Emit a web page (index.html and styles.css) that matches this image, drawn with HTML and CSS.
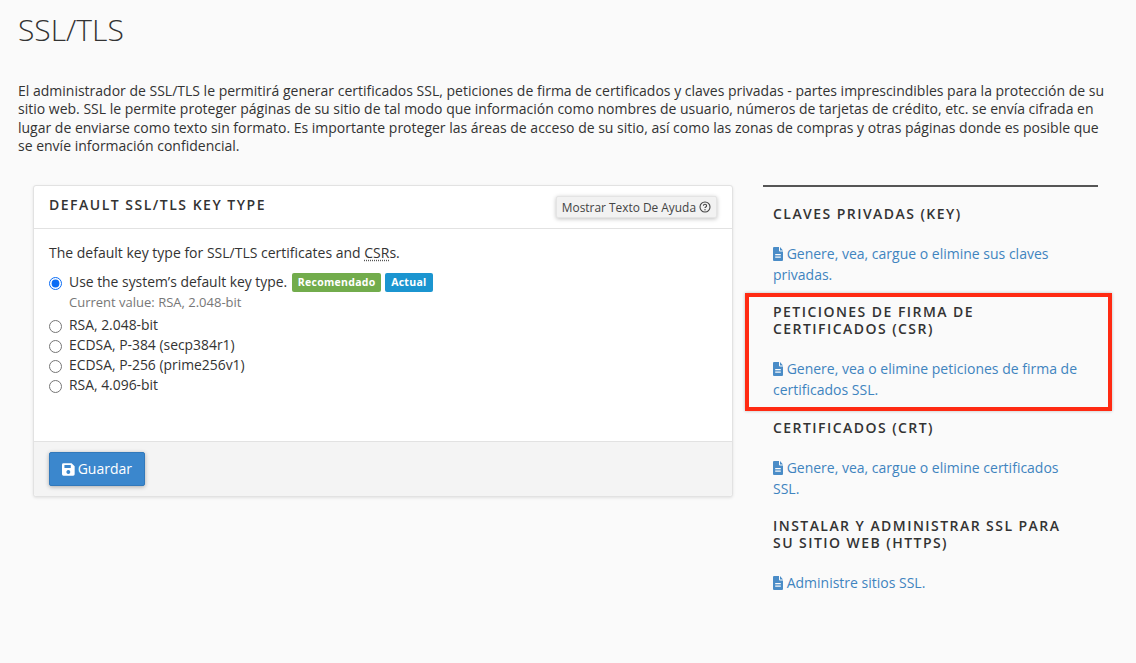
FILE: index.html
```html
<!DOCTYPE html>
<html lang="es">
<head>
<meta charset="utf-8">
<title>SSL/TLS</title>
<link rel="stylesheet" href="styles.css">
</head>
<body>
<main class="page">
  <h1 class="title">SSL/TLS</h1>
  <p class="intro">El administrador de SSL/TLS le permitirá generar certificados SSL, peticiones de firma de certificados y claves privadas - partes imprescindibles para la protección de su sitio web. SSL le permite proteger páginas de su sitio de tal modo que información como nombres de usuario, números de tarjetas de crédito, etc. se envía cifrada en lugar de enviarse como texto sin formato. Es importante proteger las áreas de acceso de su sitio, así como las zonas de compras y otras páginas donde es posible que se envíe información confidencial.</p>
  <div class="columns">
    <section class="panel">
      <header class="panel-head">
        <h2 class="panel-title">DEFAULT SSL/TLS KEY TYPE</h2>
        <button class="help-btn" type="button">Mostrar Texto De Ayuda
          <svg class="help-icon" viewBox="0 0 12 12" width="12" height="12" aria-hidden="true"><circle cx="6" cy="6" r="5" fill="none" stroke="#444" stroke-width="1.1"/><path d="M4.4 4.800c0-1 .7-1.500 1.600-1.500s1.600.5 1.600 1.400c0 1.300-1.600 1.200-1.600 2.400" fill="none" stroke="#444" stroke-width="1.1"/><circle cx="6" cy="8.700" r=".7" fill="#444"/></svg>
        </button>
      </header>
      <div class="panel-body">
        <p class="lead">The default key type for SSL/TLS certificates and <abbr class="abbr">CSR</abbr>s.</p>
        <label class="opt"><input type="radio" name="k" checked><span>Use the system’s default key type.</span><span class="badge badge-green">Recomendado</span><span class="badge badge-blue">Actual</span></label>
        <div class="current">Current value: RSA, 2.048-bit</div>
        <label class="opt"><input type="radio" name="k"><span>RSA, 2.048-bit</span></label>
        <label class="opt"><input type="radio" name="k"><span>ECDSA, P-384 (secp384r1)</span></label>
        <label class="opt"><input type="radio" name="k"><span>ECDSA, P-256 (prime256v1)</span></label>
        <label class="opt"><input type="radio" name="k"><span>RSA, 4.096-bit</span></label>
      </div>
      <footer class="panel-foot">
        <button class="save" type="button">
          <svg viewBox="0 0 13 13" width="13" height="13" aria-hidden="true"><path fill-rule="evenodd" fill="#fff" d="M1.500 0h8.300L13 3.200v8.300a1.500 1.500 0 0 1-1.500 1.500h-10A1.500 1.500 0 0 1 0 11.500v-10A1.500 1.500 0 0 1 1.500 0zM2.500 2v3h6.500V2zM6.500 7a2 2 0 1 0 .01 0z"/></svg>
          Guardar</button>
      </footer>
    </section>
    <aside class="side">
      <section class="side-block">
        <h3 class="side-title">CLAVES PRIVADAS (KEY)</h3>
        <a class="side-link" href="#"><svg class="doc" viewBox="0 0 10 14" width="10" height="14" aria-hidden="true"><path fill-rule="evenodd" d="M0 1a1 1 0 0 1 1-1h5v3.500a1 1 0 0 0 1 1h3V13a1 1 0 0 1-1 1H1a1 1 0 0 1-1-1zM2.200 7v1.200h5.600V7zM2.200 9.500v1.200h5.600V9.500zM7 0l3 3.500H7z"/></svg> Genere, vea, cargue o elimine sus claves privadas.</a>
      </section>
      <section class="side-block">
        <h3 class="side-title">PETICIONES DE FIRMA DE CERTIFICADOS (CSR)</h3>
        <a class="side-link" href="#"><svg class="doc" viewBox="0 0 10 14" width="10" height="14" aria-hidden="true"><path fill-rule="evenodd" d="M0 1a1 1 0 0 1 1-1h5v3.500a1 1 0 0 0 1 1h3V13a1 1 0 0 1-1 1H1a1 1 0 0 1-1-1zM2.200 7v1.200h5.600V7zM2.200 9.500v1.200h5.600V9.500zM7 0l3 3.500H7z"/></svg> Genere, vea o elimine peticiones de firma de certificados SSL.</a>
        <div class="callout"></div>
      </section>
      <section class="side-block side-block-low">
        <h3 class="side-title">CERTIFICADOS (CRT)</h3>
        <a class="side-link" href="#"><svg class="doc" viewBox="0 0 10 14" width="10" height="14" aria-hidden="true"><path fill-rule="evenodd" d="M0 1a1 1 0 0 1 1-1h5v3.500a1 1 0 0 0 1 1h3V13a1 1 0 0 1-1 1H1a1 1 0 0 1-1-1zM2.200 7v1.200h5.600V7zM2.200 9.500v1.200h5.600V9.500zM7 0l3 3.500H7z"/></svg> Genere, vea, cargue o elimine certificados SSL.</a>
      </section>
      <section class="side-block">
        <h3 class="side-title">INSTALAR Y ADMINISTRAR SSL PARA SU SITIO WEB (HTTPS)</h3>
        <a class="side-link" href="#"><svg class="doc" viewBox="0 0 10 14" width="10" height="14" aria-hidden="true"><path fill-rule="evenodd" d="M0 1a1 1 0 0 1 1-1h5v3.500a1 1 0 0 0 1 1h3V13a1 1 0 0 1-1 1H1a1 1 0 0 1-1-1zM2.200 7v1.200h5.600V7zM2.200 9.500v1.200h5.600V9.500zM7 0l3 3.500H7z"/></svg> Administre sitios SSL.</a>
      </section>
    </aside>
  </div>
</main>
</body>
</html>
```
FILE: styles.css
```css
* { box-sizing: border-box; }
html, body { margin: 0; height: 100%; }
body {
  background: #fafafa;
  color: #333;
  font-family: "Open Sans", "Noto Sans", sans-serif;
  font-size: 14px;
  line-height: 20px;
  overflow: hidden;
}
.page { padding: 0 18px; height: 663px; }
.title {
  margin: 0;
  padding-top: 10px;
  font-size: 30px;
  line-height: 40px;
  font-weight: 300;
  color: #333;
}
.intro { margin: 32px 0 0; width: 1090px; font-size: 14px; line-height: 18.400px; }
.columns { display: flex; margin-top: 29.400px; padding-left: 15px; gap: 30px; align-items: flex-start; }
.panel {
  width: 700px;
  height: 312px;
  background: #fff;
  border: 1px solid #e2e2e2;
  border-radius: 3px;
  box-shadow: 0 1px 3px rgba(0,0,0,.1);
  display: flex;
  flex-direction: column;
}
.panel-head {
  height: 43px;
  padding: 0 15px;
  display: flex;
  justify-content: space-between;
  align-items: flex-start;
  border-bottom: 1px solid #e2e2e2;
}
.panel-title {
  margin: 9px 0 0;
  font-size: 14px;
  line-height: 20px;
  font-weight: 600;
  letter-spacing: 1.500px;
  color: #333;
}
.help-btn {
  margin-top: 10px;
  height: 22px;
  padding: 0 5px;
  display: flex;
  align-items: center;
  gap: 3px;
  background: #f2f2f2;
  border: 1px solid #e4e4e4;
  border-radius: 2px;
  box-shadow: 0 1px 4px rgba(0,0,0,.25);
  font: 11.900px/18px "Open Sans", sans-serif;
  color: #444;
}
.help-icon { display: block; }
.panel-body { flex: 1; padding: 14px 15px 0; }
.lead { margin: 0 0 9px; line-height: 20px; font-size: 14px; }
.abbr { text-decoration: underline dotted #555; text-underline-offset: 2px; }
.opt { display: flex; align-items: center; height: 20px; font-size: 13.900px; }
.opt input { margin: 2px 7px 0 0; width: 13px; height: 13px; accent-color: #0a6cf5; flex: none; }
.current { padding-left: 20px; height: 23px; font-size: 13px; line-height: 20px; color: #777; }
.badge {
  display: inline-block;
  height: 19px;
  margin-left: 4px;
  padding: 0 6px;
  border-radius: 2px;
  color: #fff;
  font-size: 10.500px;
  line-height: 19px;
  font-weight: 700;
  letter-spacing: .3px;
}
.badge-green { background: #72ac4c; margin-left: 5px; padding: 0 5.500px; }
.badge-blue { background: #1b95d0; }
.panel-foot {
  height: 55px;
  padding: 10px 15px 0;
  background: #f4f4f4;
  border-top: 1px solid #e2e2e2;
  border-radius: 0 0 3px 3px;
}
.save {
  display: flex;
  align-items: center;
  gap: 3px;
  width: 96px;
  height: 34px;
  padding: 0 12px;
  background: #3b87cd;
  border: 1px solid #3279bb;
  border-radius: 2px;
  box-shadow: 0 1px 4px rgba(0,0,0,.3);
  color: #fff;
  font: 14px/20px "Open Sans", sans-serif;
}
.side {
  position: relative;
  width: 335px;
  border-top: 2px solid #555;
  padding: 0 15px 0 10px;
}
.side-block { position: relative; padding-top: 18px; }
.side-block-low { padding-top: 19px; }
.side-title {
  margin: 0;
  font-size: 14px;
  line-height: 17px;
  font-weight: 600;
  letter-spacing: 1.450px;
  color: #333;
}
.side-link {
  display: block;
  margin-top: 21px;
  color: #3f84bf;
  text-decoration: none;
  font-size: 14px;
  line-height: 21px;
}
.doc { fill: #4a8cc7; vertical-align: -1.500px; }
.callout {
  position: absolute;
  left: -28px;
  right: -29px;
  top: 8px;
  height: 118px;
  border: 4px solid #ff2a12;
  box-shadow: 0 0 3px rgba(0,0,0,.25);
  pointer-events: none;
}
```
